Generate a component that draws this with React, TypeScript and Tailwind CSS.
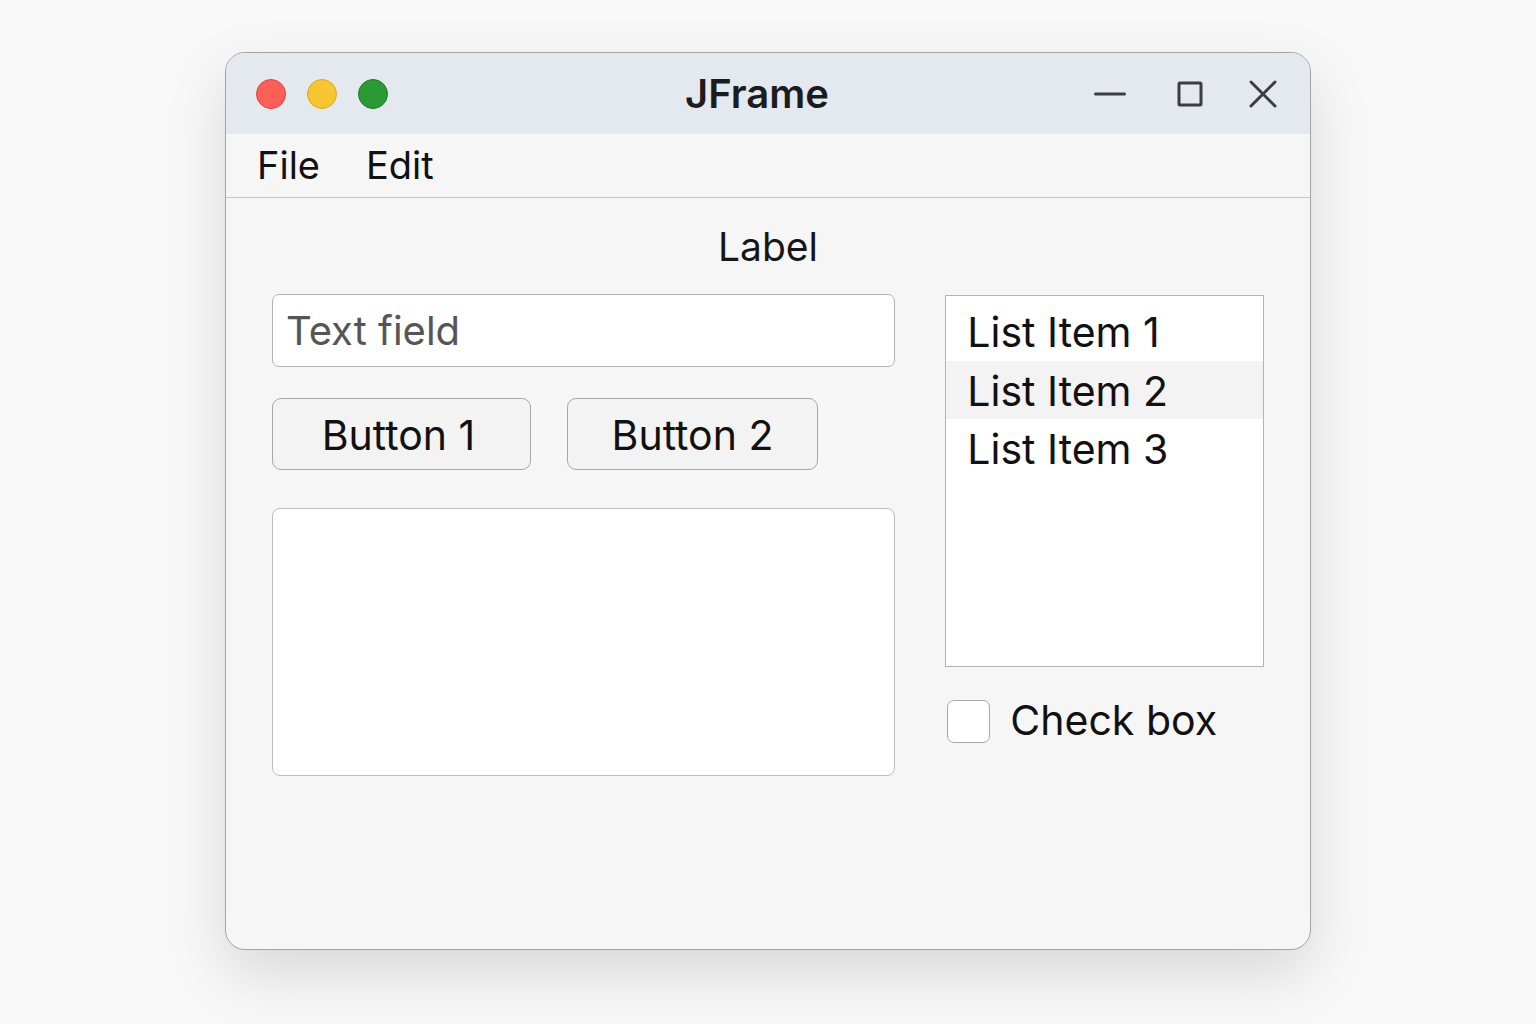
import { useState } from "react";

const font = { fontFamily: "Inter, 'Noto Sans', sans-serif" };

function TitleBar() {
    return (
        <div className="relative flex h-[81px] shrink-0 items-center bg-[#e4e9f0] px-[30px]">
            {/* traffic lights */}
            <div className="flex items-center gap-[21px]">
                <span className="size-[30px] rounded-full border border-[#e0443c] bg-[#fe5f57]" />
                <span className="size-[30px] rounded-full border border-[#dfa72a] bg-[#f6c52f]" />
                <span className="size-[30px] rounded-full border border-[#1c7a24] bg-[#2b9a35]" />
            </div>
            <div className="absolute inset-0 flex items-center justify-center pr-[22px] pointer-events-none">
                <span className="text-[40px] font-semibold text-[#1c1c1e]">JFrame</span>
            </div>
            {/* window controls */}
            <div className="ml-auto flex items-center">
                <svg width="32" height="32" viewBox="0 0 32 32" className="mr-[50px]">
                    <line x1="1.5" y1="16" x2="30.5" y2="16" stroke="#3a3d42" strokeWidth="3" strokeLinecap="round" />
                </svg>
                <svg width="28" height="28" viewBox="0 0 28 28" className="mr-[44px]">
                    <rect x="3" y="3" width="22" height="22" rx="1" fill="none" stroke="#3a3d42" strokeWidth="3" />
                </svg>
                <svg width="30" height="30" viewBox="0 0 30 30" className="mr-[2px]">
                    <path d="M3 3 L27 27 M27 3 L3 27" stroke="#3a3d42" strokeWidth="3" strokeLinecap="round" />
                </svg>
            </div>
        </div>
    );
}

function MenuBar() {
    return (
        <div className="flex h-[64px] shrink-0 items-center gap-[46px] border-b border-[#c4c4c4] bg-[#f6f6f6] px-[31px] text-[38px] text-[#111]">
            <span>File</span>
            <span>Edit</span>
        </div>
    );
}

export default function App() {
    const [checked, setChecked] = useState(false);
    const items = ["List Item 1", "List Item 2", "List Item 3"];

    return (
        <div className="flex h-[1024px] w-[1536px] items-start justify-center bg-[#f8f8f8] pt-[52px]" style={font}>
            <div className="flex h-[898px] w-[1086px] flex-col overflow-hidden rounded-[20px] border border-[#a3a3a3] bg-[#f6f6f6] shadow-[0_24px_60px_rgba(0,0,0,0.13)]">
                <TitleBar />
                <MenuBar />

                <div className="flex flex-col px-[46px]">
                    <div className="flex h-[96px] items-center justify-center pt-[3px] text-[39px] text-[#161616]">Label</div>

                    <div className="flex gap-[50px]">
                        {/* left column */}
                        <div className="flex w-[624px] flex-col">
                            <div className="flex h-[73px] items-center rounded-[7px] border border-[#b3b3b3] bg-white px-[13px] pt-[1px] text-[40px] text-[#555]">
                                Text field
                            </div>
                            <div className="mt-[31px] flex gap-[36px]">
                                <button className="h-[72px] w-[259px] rounded-[9px] border border-[#a7a7a7] bg-[#f3f3f3] pr-[6px] pt-[3px] text-[41px] text-[#111]">
                                    Button 1
                                </button>
                                <button className="h-[72px] w-[251px] rounded-[9px] border border-[#a7a7a7] bg-[#f3f3f3] pt-[3px] text-[41px] text-[#111]">
                                    Button 2
                                </button>
                            </div>
                            <div className="mt-[38px] h-[268px] rounded-[8px] border border-[#bdbdbd] bg-white" />
                        </div>

                        {/* right column */}
                        <div className="mt-[1px] flex w-[319px] flex-col">
                            <div className="flex h-[372px] flex-col border border-[#b3b3b3] bg-white pt-[6px]">
                                {items.map((item, i) => (
                                    <div
                                        key={item}
                                        className={
                                            i === 1
                                                ? "flex h-[58px] items-center bg-[#f3f3f3] pl-[21px] pt-[3px] text-[41px] text-[#111]"
                                                : "flex h-[59px] items-center pl-[21px] pt-[3px] text-[41px] text-[#111]"
                                        }
                                    >
                                        {item}
                                    </div>
                                ))}
                            </div>
                            <label className="mt-[25px] flex items-center gap-[20px] pl-[2px]">
                                <span
                                    onClick={() => setChecked(!checked)}
                                    className="size-[43px] rounded-[7px] border border-[#a8a8a8] bg-white"
                                />
                                <span className="-mt-[2px] text-[41px] text-[#111]">Check box</span>
                            </label>
                        </div>
                    </div>
                </div>
            </div>
        </div>
    );
}
